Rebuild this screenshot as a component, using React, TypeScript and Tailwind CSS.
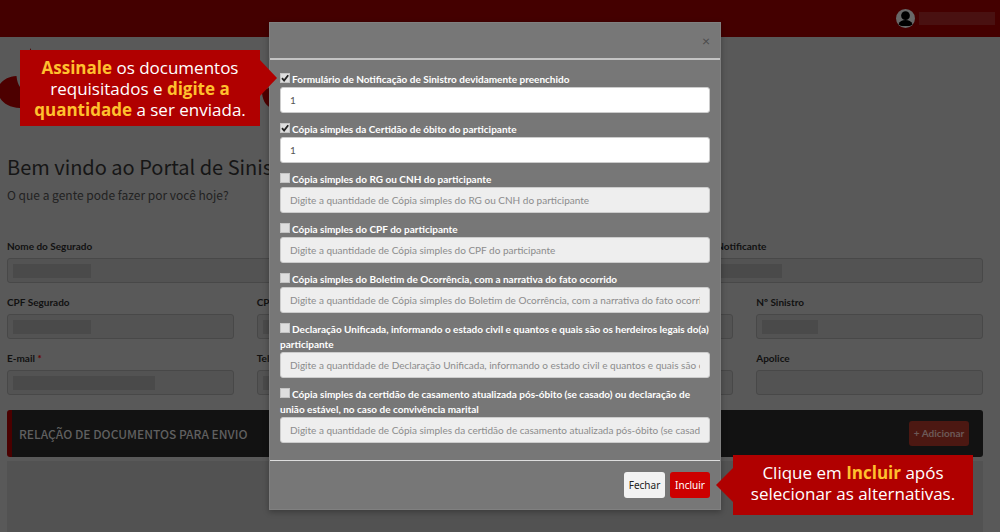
import { useState } from "react";
import type { ReactNode } from "react";

type Doc = { id: string; label: string; quantity?: string };

const docs: Doc[] = [
  { id: "formulario", label: "Formulário de Notificação de Sinistro devidamente preenchido", quantity: "1" },
  { id: "obito", label: "Cópia simples da Certidão de óbito do participante", quantity: "1" },
  { id: "rg", label: "Cópia simples do RG ou CNH do participante" },
  { id: "cpf", label: "Cópia simples do CPF do participante" },
  { id: "boletim", label: "Cópia simples do Boletim de Ocorrência, com a narrativa do fato ocorrido" },
  {
    id: "declaracao",
    label: "Declaração Unificada, informando o estado civil e quantos e quais são os herdeiros legais do(a) participante",
  },
  {
    id: "casamento",
    label:
      "Cópia simples da certidão de casamento atualizada pós-óbito (se casado) ou declaração de união estável, no caso de convivência marital",
  },
];

function Field({ id, label, required, mask }: { id: string; label: string; required?: boolean; mask?: string }) {
  return (
    <div className="flex flex-col gap-[3px]">
      <label htmlFor={id} className="h-[18px] text-[10px] leading-[18px] font-bold whitespace-nowrap text-[#111]">
        {label}
        {required && <span className="text-[#6b0000]"> *</span>}
      </label>
      <div className="grid items-center">
        <input
          id={id}
          readOnly
          className="col-start-1 row-start-1 h-[25px] w-full rounded-[3px] border border-[#484848] bg-[#535353]"
        />
        {mask && <span className={`col-start-1 row-start-1 ml-1.5 h-[14px] bg-[#4a4a4a] ${mask}`} />}
      </div>
    </div>
  );
}

function DocumentItem({ doc }: { doc: Doc }) {
  const [checked, setChecked] = useState(doc.quantity !== undefined);
  const [value, setValue] = useState(doc.quantity ?? "");
  return (
    <div>
      <label className="block text-[10px] leading-[15px] font-bold text-white">
        <span className="mr-0.5 inline-grid size-[10px]">
          <input
            type="checkbox"
            checked={checked}
            onChange={(e) => setChecked(e.target.checked)}
            className="col-start-1 row-start-1 size-[10px] appearance-none border border-[#c4c4c4] bg-[#dedede]"
          />
          {checked && (
            <svg viewBox="0 0 10 10" className="pointer-events-none col-start-1 row-start-1 size-[10px]">
              <path d="M2 5.2 4.1 7.6 8.2 2.2" fill="none" stroke="#222" strokeWidth="1.8" />
            </svg>
          )}
        </span>
        {doc.label}
      </label>
      <input
        type="text"
        aria-label={`Quantidade: ${doc.label}`}
        disabled={!checked}
        value={value}
        onChange={(e) => setValue(e.target.value)}
        placeholder={`Digite a quantidade de ${doc.label}`}
        className="block h-[26px] w-full rounded-[3px] border border-[#ccc] bg-white px-[9px] text-[10px] text-[#555] placeholder:text-[#8c8c8c] disabled:bg-[#eee]"
      />
    </div>
  );
}

function Mark({ children }: { children: ReactNode }) {
  return <strong className="font-bold text-[#ffc02e]">{children}</strong>;
}

export default function App() {
  return (
    <div className="relative min-h-screen overflow-hidden bg-[#595959] font-[Lato,sans-serif]">
      <header className="flex h-[37px] items-center justify-end gap-1 bg-[#440000] pr-[5px]">
        <svg viewBox="0 0 20 20" className="size-[19px]" aria-label="Usuário">
          <circle cx="10" cy="10" r="10" fill="#686868" />
          <circle cx="10" cy="7" r="4.6" fill="#000" />
          <path d="M2.6 16.2C4 12.8 6.4 11.6 10 11.6s6 1.2 7.4 4.6A10 10 0 0 1 14 18H6a10 10 0 0 1-3.4-1.8Z" fill="#000" />
        </svg>
        <span className="h-[13px] w-[76px] bg-[#491111]" />
      </header>

      <svg viewBox="0 0 300 110" className="block h-[110px] w-[300px]" aria-hidden="true">
        <path d="M0 47C4 42 9 39.5 16.5 39 17 44 18 47 20 50V71C10 70.5 4 67 0 61ZM30.5 11 32 16H29Z" fill="#4d0000" />
        <path d="M262 54C262 62 265 68 271 71V50Z" fill="#4d0000" />
      </svg>

      <main className="pr-[17px] pl-[7px]">
        <h1 className="font-['Noto_Sans_CJK_SC',sans-serif] text-[20px] leading-[40px] text-[#161616]">
          Bem vindo ao Portal de Sinistros
        </h1>
        <p className="font-['Noto_Sans_CJK_SC',sans-serif] text-[12px] leading-[16px] text-[#222]">
          O que a gente pode fazer por você hoje?
        </p>

        <form className="flex flex-col gap-[10px] pt-[34px]">
          <div className="grid grid-cols-3 gap-[23px]">
            <Field id="nome" label="Nome do Segurado" mask="w-[78px]" />
            <div className="col-start-3">
              <Field id="notificante" label="Nome do Notificante" mask="w-[103px]" />
            </div>
          </div>
          <div className="grid grid-cols-4 gap-[23px]">
            <Field id="cpf-segurado" label="CPF Segurado" mask="w-[78px]" />
            <Field id="cpf-notificante" label="CPF Notificante" mask="w-[78px]" />
            <Field id="certificado" label="Certificado" />
            <Field id="sinistro" label="Nº Sinistro" mask="w-[56px]" />
          </div>
          <div className="grid grid-cols-4 gap-[23px]">
            <Field id="email" label="E-mail" required mask="w-[142px]" />
            <Field id="telefone" label="Telefone" mask="w-[78px]" />
            <Field id="celular" label="Celular" />
            <Field id="apolice" label="Apolice" />
          </div>
        </form>

        <section className="mt-[15px]">
          <div className="flex h-[47px] items-center justify-between rounded-[3px] border-l-[5px] border-[#4a0000] bg-[#121212] pr-[14px] pl-[7px]">
            <h2 className="font-['Noto_Sans_CJK_SC',sans-serif] text-[12px] font-medium text-[#606060]">
              RELAÇÃO DE DOCUMENTOS PARA ENVIO
            </h2>
            <button type="button" className="h-[25px] w-[60px] rounded-[3px] bg-[#4c1812] text-[10px] font-bold text-[#6c5a58]">
              + Adicionar
            </button>
          </div>
          <div className="mt-1 h-[80px] bg-[#525252]" />
        </section>
      </main>

      <div className="absolute inset-0 flex items-start justify-center pt-[22px] pr-[10px]">
        <div
          role="dialog"
          aria-label="Documentos"
          className="relative w-full max-w-[452px] border border-[#808080] bg-[#777] shadow-[0_2px_6px_rgba(0,0,0,0.3)]"
        >
          <div className="flex h-[37px] items-center justify-end border-b-2 border-[#c4c4c4] pr-[10px]">
            <button type="button" aria-label="Fechar janela" className="text-[14px] leading-none text-[#4a4a4a]">
              ×
            </button>
          </div>
          <div className="flex flex-col gap-[9px] px-[10px] pt-[12px] pb-[17px]">
            {docs.map((doc) => (
              <DocumentItem key={doc.id} doc={doc} />
            ))}
          </div>
          <div className="flex justify-end gap-[5px] border-t border-[#ddd] px-[10px] pt-[11px] pb-[11px] font-['Noto_Sans',sans-serif] text-[10px]">
            <button type="button" className="h-[26px] w-[41px] rounded-[3px] bg-[#f2f2f2] text-[#222]">
              Fechar
            </button>
            <button type="button" className="h-[26px] w-[40px] rounded-[3px] bg-[#cc0000] text-white">
              Incluir
            </button>
          </div>

          <div className="absolute top-[27px] right-[460px] w-[240px] bg-[#b00000] pt-[7px] pb-[6px] text-center font-['Open_Sans',sans-serif] text-[17px] leading-[21px] text-white">
            <Mark>Assinale</Mark> os documentos
            <br />
            requisitados e <Mark>digite a</Mark>
            <br />
            <Mark>quantidade</Mark> a ser enviada.
            <svg viewBox="0 0 17 36" className="absolute top-[10px] left-full h-[36px] w-[17px]" aria-hidden="true">
              <path d="M0 0 17 18 0 36Z" fill="#b00000" />
            </svg>
          </div>

          <div className="absolute top-[432px] left-[463px] w-[240px] bg-[#b00000] pt-[7px] pb-[11px] text-center font-['Open_Sans',sans-serif] text-[17px] leading-[21px] text-white">
            Clique em <Mark>Incluir</Mark> após
            <br />
            selecionar as alternativas.
            <svg viewBox="0 0 17 34" className="absolute top-[13px] right-full h-[34px] w-[17px]" aria-hidden="true">
              <path d="M17 0 0 17 17 34Z" fill="#b00000" />
            </svg>
          </div>
        </div>
      </div>
    </div>
  );
}
